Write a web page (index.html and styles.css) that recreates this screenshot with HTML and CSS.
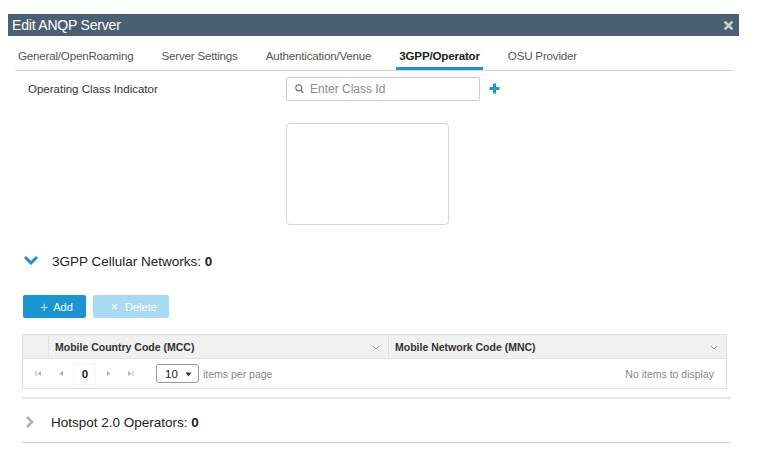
FILE: index.html
```html
<!DOCTYPE html>
<html>
<head>
<meta charset="utf-8">
<link rel="stylesheet" href="styles.css">
</head>
<body>
<div class="dialog">
  <div class="titlebar">
    <span class="title">Edit ANQP Server</span>
    <svg class="close" width="9" height="9" viewBox="0 0 9 9"><path d="M1.5 1.5 L7.5 7.5 M7.5 1.5 L1.5 7.5" stroke="#c9ced3" stroke-width="2.6" stroke-linecap="square"/></svg>
  </div>
  <div class="tabs">
    <div class="tab">General/OpenRoaming</div>
    <div class="tab">Server Settings</div>
    <div class="tab">Authentication/Venue</div>
    <div class="tab active">3GPP/Operator</div>
    <div class="tab">OSU Provider</div>
  </div>
  <div class="content">
    <div class="field-row">
      <div class="label">Operating Class Indicator</div>
      <div class="search">
        <svg width="9" height="10" viewBox="0 0 9 10"><circle cx="3.8" cy="3.8" r="3" fill="none" stroke="#777" stroke-width="1.2"/><path d="M6 6.2 L8.3 8.8" stroke="#777" stroke-width="1.3"/></svg>
        <span class="placeholder">Enter Class Id</span>
      </div>
      <svg class="plus" width="11" height="11" viewBox="0 0 11 11"><path d="M5.5 0.5 V10.5 M0.5 5.5 H10.5" stroke="#1f95d3" stroke-width="3"/></svg>
    </div>
    <div class="listbox"></div>

    <div class="section-head">
      <svg class="chev-down" width="16" height="10" viewBox="0 0 16 10"><polyline points="2,2 8,8 14,2" fill="none" stroke="#1f8fd0" stroke-width="3"/></svg>
      <span class="section-title">3GPP Cellular Networks: <b>0</b></span>
    </div>

    <div class="buttons">
      <div class="btn btn-add"><span class="ico">+</span>Add</div>
      <div class="btn btn-del"><span class="ico">×</span>Delete</div>
    </div>

    <div class="grid">
      <div class="grid-head">
        <div class="col-sel"></div>
        <div class="col col-mcc">Mobile Country Code (MCC)
          <svg width="8" height="5" viewBox="0 0 8 5"><polyline points="1,1 4,4 7,1" fill="none" stroke="#999" stroke-width="1"/></svg>
        </div>
        <div class="col col-mnc">Mobile Network Code (MNC)
          <svg width="8" height="5" viewBox="0 0 8 5"><polyline points="1,1 4,4 7,1" fill="none" stroke="#999" stroke-width="1"/></svg>
        </div>
      </div>
      <div class="pager">
        <svg class="pg first" width="7" height="7" viewBox="0 0 7 7"><path d="M1 1 V6" stroke="#b5b5b5" stroke-width="1"/><path d="M6 1 L2.5 3.5 L6 6 Z" fill="#b5b5b5"/></svg>
        <svg class="pg prev" width="6" height="7" viewBox="0 0 6 7"><path d="M5 1 L1.5 3.5 L5 6 Z" fill="#a8a8a8"/></svg>
        <span class="page-num">0</span>
        <svg class="pg next" width="6" height="7" viewBox="0 0 6 7"><path d="M1 1 L4.5 3.5 L1 6 Z" fill="#b5b5b5"/></svg>
        <svg class="pg last" width="7" height="7" viewBox="0 0 7 7"><path d="M1 1 L4.5 3.5 L1 6 Z" fill="#b5b5b5"/><path d="M6 1 V6" stroke="#b5b5b5" stroke-width="1"/></svg>
        <div class="select">10
          <svg width="7" height="5" viewBox="0 0 7 5"><path d="M0.5 0.5 H6.5 L3.5 4.5 Z" fill="#333"/></svg>
        </div>
        <span class="ipp">items per page</span>
        <span class="noitems">No items to display</span>
      </div>
    </div>

    <div class="sep"></div>

    <div class="section-head closed">
      <svg class="chev-right" width="10" height="14" viewBox="0 0 10 14"><polyline points="2,2 7,7 2,12" fill="none" stroke="#b0b0b0" stroke-width="2.6"/></svg>
      <span class="section-title">Hotspot 2.0 Operators: <b>0</b></span>
    </div>
    <div class="sep2"></div>
  </div>
</div>
</body>
</html>
```
FILE: styles.css
```css
* { box-sizing: border-box; }
html, body { margin: 0; padding: 0; background: #fff; }
body {
  font-family: "Liberation Sans", Arial, Helvetica, sans-serif;
  color: #333;
}
.dialog {
  width: 731px;
  margin: 14px 0 0 8px;
}
.titlebar {
  height: 22px;
  background: #4b5f72;
  display: flex;
  align-items: center;
  justify-content: space-between;
  padding: 0 6px 0 4px;
}
.title {
  color: #fff;
  font-size: 14px;
  letter-spacing: -0.2px;
}
.close { display: block; margin-right: 0; }

.tabs {
  height: 35px;
  margin: 0 5px 0 7px;
  border-bottom: 1px solid #d4d4d4;
  display: flex;
  align-items: flex-end;
  gap: 22px;
}
.tab {
  font-size: 11.6px;
  letter-spacing: -0.2px;
  line-height: 16px;
  color: #555;
  padding: 0 3px 3px;
  border-bottom: 3px solid transparent;
  white-space: nowrap;
}
.tab.active {
  font-weight: bold;
  color: #222;
  border-bottom-color: #1a95d4;
}

.content { display: flex; flex-direction: column; }

.field-row {
  display: flex;
  align-items: center;
  margin-top: 6px;
  padding-left: 20px;
}
.label {
  width: 258px;
  font-size: 11.5px;
  color: #333;
}
.search {
  width: 194px;
  height: 24px;
  border: 1px solid #c8ccd0;
  border-radius: 2px;
  display: flex;
  align-items: center;
  padding-left: 8px;
  gap: 6px;
}
.search svg { display: block; }
.placeholder { font-size: 12px; color: #8a8a8a; }
.plus { margin-left: 9px; margin-top: -2px; display: block; }

.listbox {
  margin: 22px 0 0 278px;
  width: 163px;
  height: 102px;
  border: 1px solid #d6d6d6;
  border-radius: 4px;
}

.section-head {
  display: flex;
  align-items: center;
  height: 20px;
  margin-top: 26px;
  padding-left: 15px;
}
.chev-down { display: block; margin-right: 13px; margin-top: -2px; }
.section-title {
  font-size: 13.5px;
  color: #222;
}
.section-title b { font-weight: bold; }

.buttons {
  display: flex;
  gap: 7px;
  margin: 24px 0 0 15px;
}
.btn {
  height: 23px;
  border-radius: 2px;
  display: flex;
  align-items: center;
  font-size: 11px;
  color: #fff;
}
.btn .ico { font-size: 14px; font-weight: 300; margin-right: 5px; }
.btn-add {
  width: 63px;
  background: #1b95d2;
  padding-left: 17px;
  color: #fff;
}
.btn-add .ico { color: #bde3f6; }
.btn-del {
  width: 76px;
  background: #a8daf1;
  padding-left: 18px;
}
.btn-del .ico { font-size: 12px; margin-right: 7px; }

.grid {
  margin: 16px 0 0 14px;
  width: 705px;
  border: 1px solid #e0e0e0;
}
.grid-head {
  display: flex;
  height: 24px;
  background: #f1f1f1;
  border-bottom: 1px solid #e3e3e3;
}
.col-sel { width: 26px; border-right: 1px solid #e0e0e0; }
.col {
  display: flex;
  align-items: center;
  justify-content: space-between;
  font-size: 10.5px;
  font-weight: bold;
  color: #333;
  padding: 0 8px 0 6px;
}
.col svg { display: block; margin-top: 2px; }
.col-mcc { width: 340px; border-right: 1px solid #e0e0e0; }
.col-mnc { flex: 1; }

.pager {
  height: 29px;
  display: flex;
  align-items: center;
  padding-left: 12px;
  font-size: 10.5px;
}
.pg { display: block; }
.pg.prev { margin-left: 16px; }
.page-num {
  width: 22px;
  height: 22px;
  margin-left: 10px;
  display: flex;
  align-items: center;
  justify-content: center;
  font-weight: bold;
  font-size: 11.5px;
  color: #222;
  border: 1px dotted #eeeeee;
}
.pg.next { margin-left: 10px; }
.pg.last { margin-left: 15px; }
.select {
  margin-left: 22px;
  width: 43px;
  height: 19px;
  border: 1px solid #9a9a9a;
  border-radius: 3px;
  display: flex;
  align-items: center;
  justify-content: space-between;
  padding: 0 6px 0 8px;
  font-size: 11.5px;
  color: #222;
}
.select svg { display: block; margin-top: 2px; }
.ipp { margin-left: 4px; color: #888; }
.noitems { margin-left: auto; margin-right: 12px; color: #888; }

.sep {
  margin: 8px 0 0 14px;
  width: 709px;
  height: 2px;
  background: #e6e6e6;
}
.section-head.closed { margin-top: 13px; padding-left: 17px; }
.chev-right { display: block; margin-right: 16px; }
.sep2 {
  margin: 10px 0 0 14px;
  width: 709px;
  height: 1px;
  background: #d0d0d0;
}
```
